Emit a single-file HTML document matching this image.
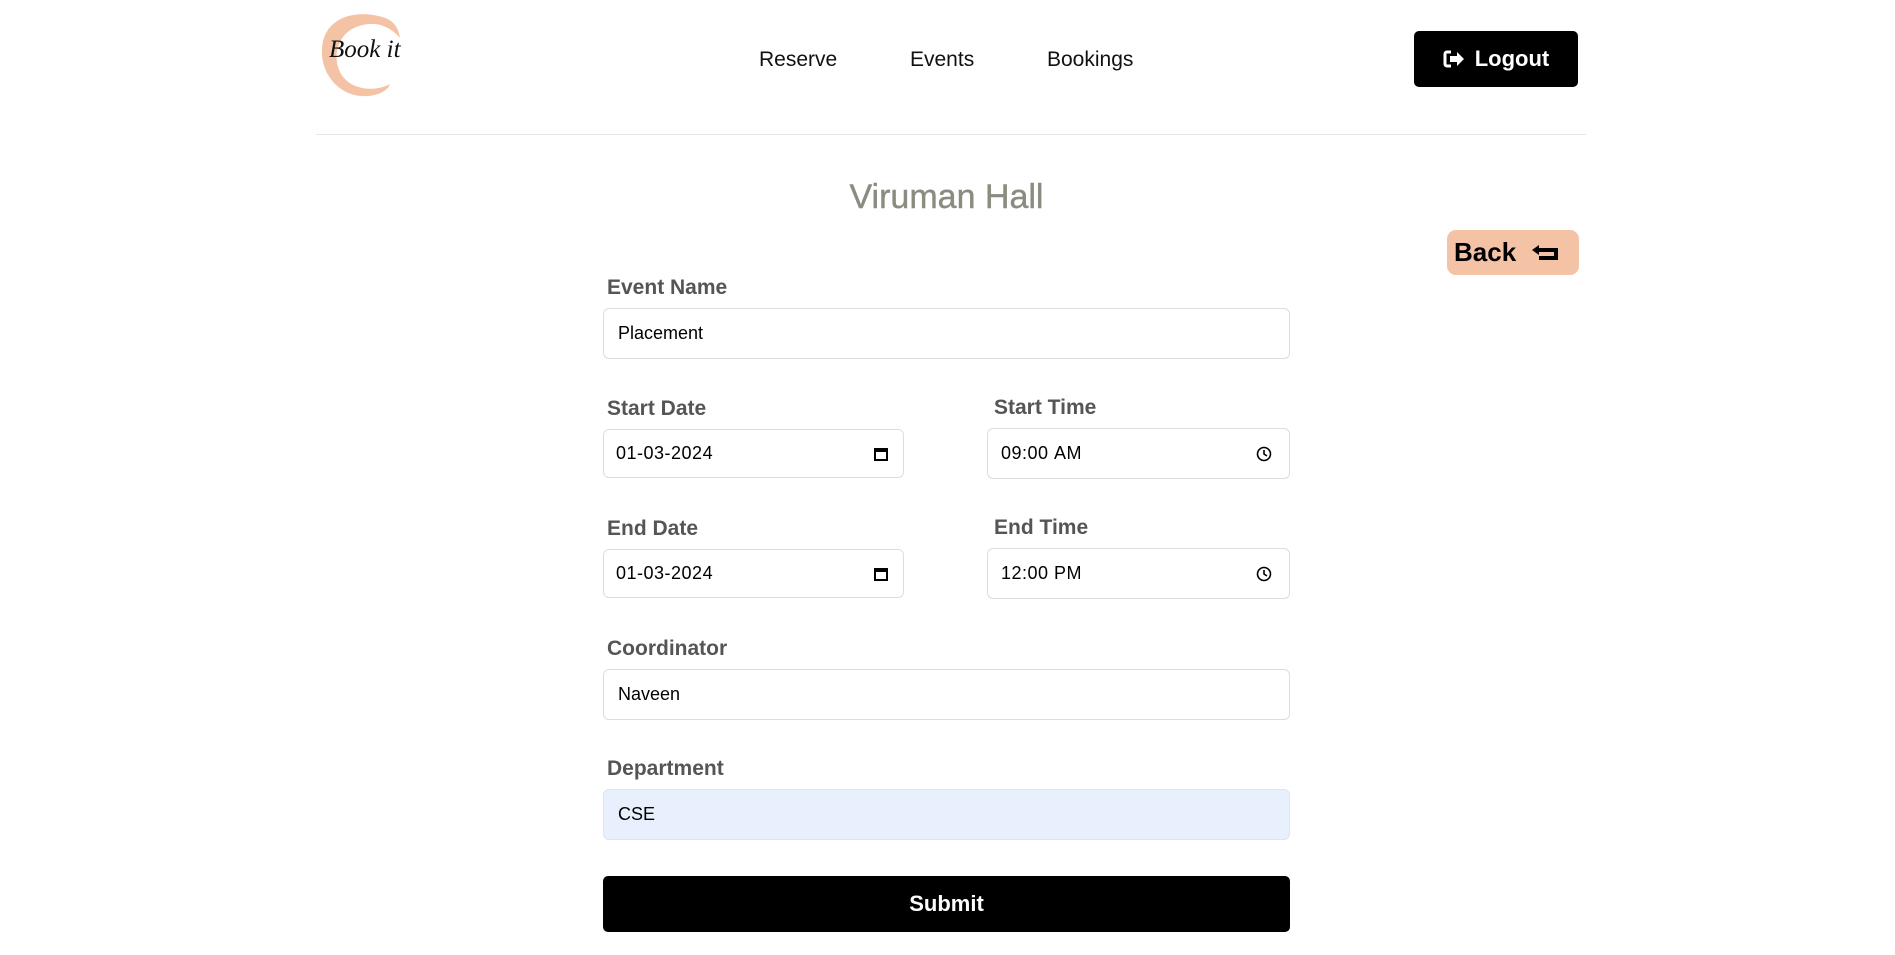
<!DOCTYPE html>
<html><head><meta charset="utf-8"><style>
*{box-sizing:border-box;margin:0;padding:0}
body{width:1895px;height:955px;background:#fff;font-family:"Liberation Sans",Arial,sans-serif;position:relative;overflow:hidden}
.abs{position:absolute}
.nav{font-size:21px;color:#111;top:48px}
.lbl{position:absolute;font-size:21px;font-weight:bold;color:#555;left:609px}
.inp{position:absolute;border:1px solid #ddd;border-radius:6px;background:#fff;font-size:18px;color:#000;padding-left:14px;display:flex;align-items:center}
</style></head><body>
<svg class="abs" style="left:318px;top:12px" width="92" height="88" viewBox="0 0 92 88">
<path d="M60 4 C36 -2 6 6 4 36 C2 62 22 86 50 84 C62 83 70 78 72 72 C58 80 36 78 26 66 C14 52 16 26 36 16 C54 8 70 12 82 26 C80 12 72 6 60 4Z" fill="#f4c3a6"/>
</svg>
<div class="abs" style="left:329px;top:36px;font-family:'Liberation Serif',serif;font-style:italic;font-size:25px;color:#111">Book it</div>
<div class="abs nav" style="left:759px">Reserve</div>
<div class="abs nav" style="left:910px">Events</div>
<div class="abs nav" style="left:1047px">Bookings</div>
<div class="abs" style="left:1414px;top:31px;width:164px;height:56px;background:#000;border-radius:5px;color:#fff;font-weight:bold;font-size:22px;display:flex;align-items:center;justify-content:center;gap:10px">
<svg width="22" height="18" viewBox="0 0 22 18"><path d="M8 2H4a2 2 0 0 0-2 2v10a2 2 0 0 0 2 2h4" stroke="#fff" stroke-width="3" fill="none"/><path d="M7 6h7V2l7 7-7 7v-4H7z" fill="#fff"/></svg>Logout</div>
<div class="abs" style="left:316px;top:134px;width:1270px;height:1px;background:#e6e6e6"></div>
<div class="abs" style="left:0;width:1895px;text-align:center;top:178px;font-size:34px;color:#8b8b80;padding-right:2px;-webkit-text-stroke:0.4px #8b8b80">Viruman Hall</div>
<div class="abs" style="left:1447px;top:230px;width:132px;height:45px;background:#f4c3a6;border-radius:9px;font-weight:bold;font-size:26px;color:#000;padding-left:7px;display:flex;align-items:center;gap:14px">Back
<svg width="30" height="20" viewBox="0 0 30 20"><path d="M9 2 2 7l7 5V9h15v4H9v4h19V5H9z" fill="#000"/></svg></div>

<div class="lbl" style="top:276px;left:607px">Event Name</div>
<div class="inp" style="left:603px;top:308px;width:687px;height:51px">Placement</div>

<div class="lbl" style="top:397px;left:607px">Start Date</div>
<div class="inp" style="left:603px;top:429px;width:301px;height:49px;padding-left:12px;justify-content:space-between;padding-right:14px;letter-spacing:.5px">01-03-2024
<svg width="16" height="16" viewBox="0 0 16 16"><rect x="2" y="3" width="12" height="11" fill="none" stroke="#000" stroke-width="2"/><rect x="2" y="3" width="12" height="3" fill="#000"/></svg></div>
<div class="lbl" style="top:396px;left:994px">Start Time</div>
<div class="inp" style="left:987px;top:428px;width:303px;height:51px;padding-left:13px;justify-content:space-between;padding-right:17px;letter-spacing:.5px">09:00&nbsp;AM
<svg width="16" height="16" viewBox="0 0 16 16"><circle cx="8" cy="8" r="6.5" fill="none" stroke="#000" stroke-width="1.6"/><path d="M8 4v4l3 2" fill="none" stroke="#000" stroke-width="1.6"/></svg></div>

<div class="lbl" style="top:517px;left:607px">End Date</div>
<div class="inp" style="left:603px;top:549px;width:301px;height:49px;padding-left:12px;justify-content:space-between;padding-right:14px;letter-spacing:.5px">01-03-2024
<svg width="16" height="16" viewBox="0 0 16 16"><rect x="2" y="3" width="12" height="11" fill="none" stroke="#000" stroke-width="2"/><rect x="2" y="3" width="12" height="3" fill="#000"/></svg></div>
<div class="lbl" style="top:516px;left:994px">End Time</div>
<div class="inp" style="left:987px;top:548px;width:303px;height:51px;padding-left:13px;justify-content:space-between;padding-right:17px;letter-spacing:.5px">12:00&nbsp;PM
<svg width="16" height="16" viewBox="0 0 16 16"><circle cx="8" cy="8" r="6.5" fill="none" stroke="#000" stroke-width="1.6"/><path d="M8 4v4l3 2" fill="none" stroke="#000" stroke-width="1.6"/></svg></div>

<div class="lbl" style="top:637px;left:607px">Coordinator</div>
<div class="inp" style="left:603px;top:669px;width:687px;height:51px">Naveen</div>

<div class="lbl" style="top:757px;left:607px">Department</div>
<div class="inp" style="left:603px;top:789px;width:687px;height:51px;background:#e8f0fe;border-color:#dde4ee">CSE</div>

<div class="abs" style="left:603px;top:876px;width:687px;height:56px;background:#000;border-radius:5px;color:#fff;font-weight:bold;font-size:22px;display:flex;align-items:center;justify-content:center">Submit</div>
</body></html>
